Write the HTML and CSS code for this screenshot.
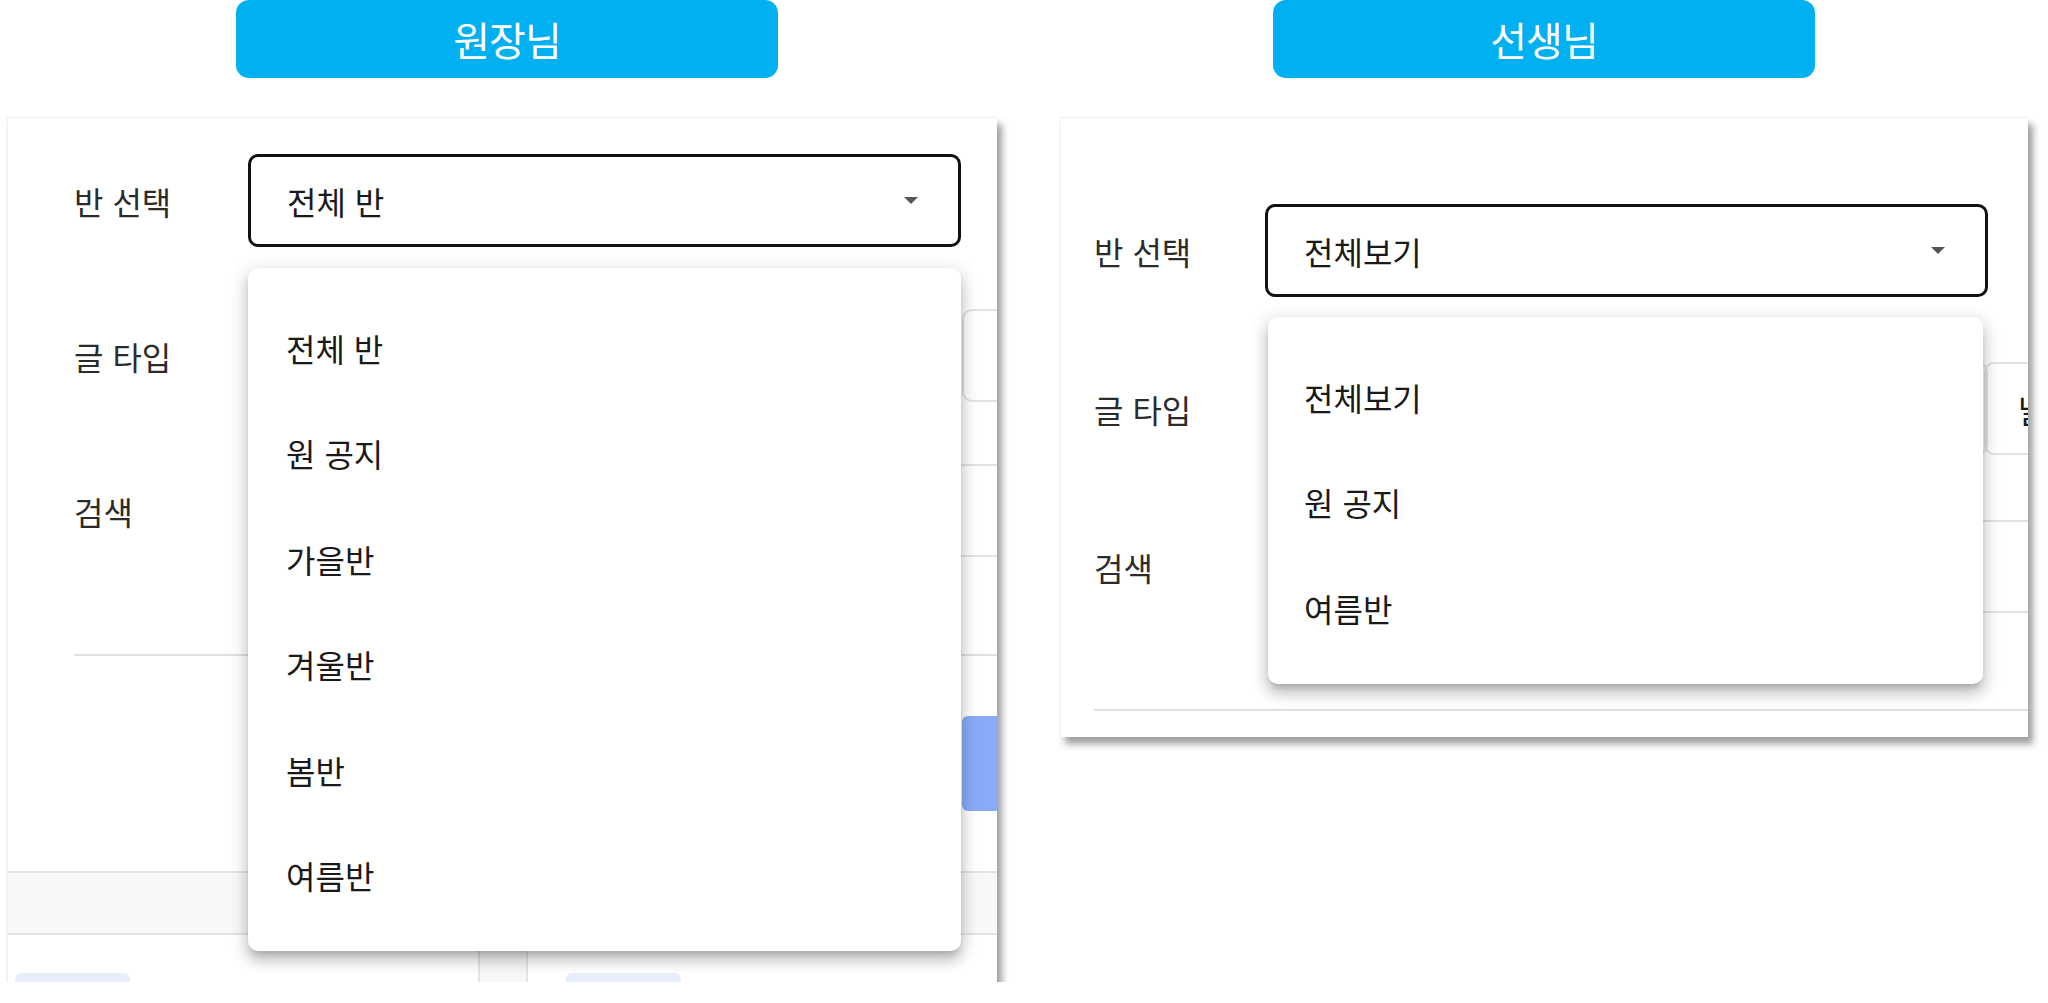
FILE: index.html
```html
<!DOCTYPE html>
<html lang="ko">
<head>
  <meta charset="UTF-8" />
  <title>반 선택 드롭다운 비교</title>
  <link rel="stylesheet" href="styles.css">
</head>
<body>
  <div class="page">
    <section class="panel owner">
      <div class="role">원장님</div>
      <div class="card">
        <div class="form">
          <div class="row">
            <span class="label">반 선택</span>
            <div class="select active"><span>전체 반</span><i class="caret"></i></div>
          </div>
          <div class="row">
            <span class="label">글 타입</span>
            <div class="select"></div>
            <div class="field"></div>
          </div>
          <div class="row">
            <span class="label">검색</span>
            <div class="search"></div>
          </div>
        </div>
        <div class="sep"></div>
        <div class="actions"><div class="btn-search"></div></div>
        <div class="thead"></div>
        <div class="trow">
          <span class="pill"></span>
          <span class="col-mid"></span>
          <span class="pill"></span>
        </div>
        <ul class="menu">
          <li>전체 반</li>
          <li>원 공지</li>
          <li>가을반</li>
          <li>겨울반</li>
          <li>봄반</li>
          <li>여름반</li>
        </ul>
      </div>
    </section>

    <section class="panel teacher">
      <div class="role">선생님</div>
      <div class="card">
        <div class="form">
          <div class="row">
            <span class="label">반 선택</span>
            <div class="select active"><span>전체보기</span><i class="caret"></i></div>
          </div>
          <div class="row">
            <span class="label">글 타입</span>
            <div class="select"></div>
            <div class="field">날짜</div>
          </div>
          <div class="row">
            <span class="label">검색</span>
            <div class="search"></div>
          </div>
        </div>
        <div class="sep"></div>
        <ul class="menu">
          <li>전체보기</li>
          <li>원 공지</li>
          <li>여름반</li>
        </ul>
      </div>
    </section>
  </div>
</body>
</html>
```

FILE: styles.css
```css
* { box-sizing: border-box; }
body {
  margin: 0;
  background: #ffffff;
  font-family: "Noto Sans CJK KR", "Noto Sans", sans-serif;
  color: #1a1a1a;
}
.page {
  display: flex;
  gap: 63px;
  padding-left: 7px;
}
.panel { display: flex; flex-direction: column; }
.owner { width: 990px; }
.teacher { width: 968px; }

.role {
  width: 542px;
  height: 78px;
  background: #00b0f0;
  color: #fff;
  border-radius: 13px;
  font-size: 40px;
  display: flex;
  align-items: center;
  justify-content: center;
  letter-spacing: -1px;
}
.owner .role { margin-left: 229px; }
.teacher .role { margin-left: 213px; }

.card {
  position: relative;
  margin-top: 39px;
  background: #fff;
  overflow: hidden;
  border-top: 1px solid #f0f0f0;
  border-left: 1px solid #f0f0f0;
  box-shadow: 5px 7px 7px rgba(0, 0, 0, 0.38);
}
.owner .card { height: 865px; padding-left: 66px; }
.teacher .card { height: 620px; padding-left: 33px; }

.form { display: flex; flex-direction: column; width: 1400px; }
.owner .form { padding-top: 36px; gap: 62px; }
.teacher .form { padding-top: 86px; gap: 65px; }

.row { display: flex; align-items: center; height: 93px; }
.label {
  font-size: 32px;
  color: #2b2b2b;
  flex: none;
}
.owner .label { width: 174px; }
.teacher .label { width: 171px; }

.select {
  height: 100%;
  border: 2px solid #e2e2e2;
  border-left-color: transparent;
  border-radius: 10px;
  display: flex;
  align-items: center;
  justify-content: space-between;
  font-size: 32px;
  padding: 0 40px 0 36px;
  flex: none;
}
.owner .select { width: 713px; }
.teacher .select { width: 723px; }
.select.active { border: 3px solid #111; }
.caret {
  width: 0;
  height: 0;
  border-left: 7px solid transparent;
  border-right: 7px solid transparent;
  border-top: 7px solid #555;
}
.field {
  height: 100%;
  width: 300px;
  margin-left: 1px;
  border: 2px solid #e2e2e2;
  border-radius: 10px;
  font-size: 32px;
  display: flex;
  align-items: center;
  padding-left: 32px;
}
.teacher .field { margin-left: -4px; }
.search {
  height: 100%;
  width: 1000px;
  border: 2px solid #e2e2e2;
  border-left-color: transparent;
  border-radius: 10px;
}

.sep {
  height: 2px;
  width: 1200px;
  background: #e0e0e0;
}
.owner .sep { margin-top: 97px; }
.teacher .sep { margin-top: 96px; }

.actions { margin-top: 60px; padding-left: 888px; }
.btn-search {
  width: 200px;
  height: 95px;
  background: #89abf7;
  border-radius: 6px;
}
.thead {
  margin: 60px 0 0 -66px;
  height: 64px;
  width: 1100px;
  background: #f7f8fa;
  border-top: 2px solid #e3e3e3;
  border-bottom: 2px solid #e3e3e3;
}
.trow {
  margin-left: -66px;
  display: flex;
  align-items: flex-start;
  height: 60px;
}
.pill {
  margin-top: 38px;
  width: 115px;
  height: 20px;
  background: #e8eefc;
  border-radius: 6px;
}
.trow .pill:first-child { margin-left: 7px; }
.col-mid {
  margin-left: 348px;
  width: 50px;
  height: 100%;
  background: #f6f7f9;
  border-left: 2px solid #e4e4e4;
  border-right: 2px solid #e4e4e4;
}
.trow .pill:last-child { margin-left: 38px; }

.menu {
  position: absolute;
  list-style: none;
  margin: 0;
  padding: 27px 0 23px;
  background: #fff;
  border-radius: 10px;
  box-shadow: 0 6px 7px -4px rgba(0, 0, 0, 0.2), 0 10px 13px 1px rgba(0, 0, 0, 0.14), 0 4px 18px 3px rgba(0, 0, 0, 0.12);
}
.owner .menu { left: 240px; top: 150px; width: 713px; }
.teacher .menu { left: 207px; top: 199px; width: 715px; }
.menu li {
  height: 105.5px;
  display: flex;
  align-items: center;
  padding-left: 38px;
  font-size: 32px;
  color: #1a1a1a;
}
.teacher .menu li { padding-left: 36px; }
```
